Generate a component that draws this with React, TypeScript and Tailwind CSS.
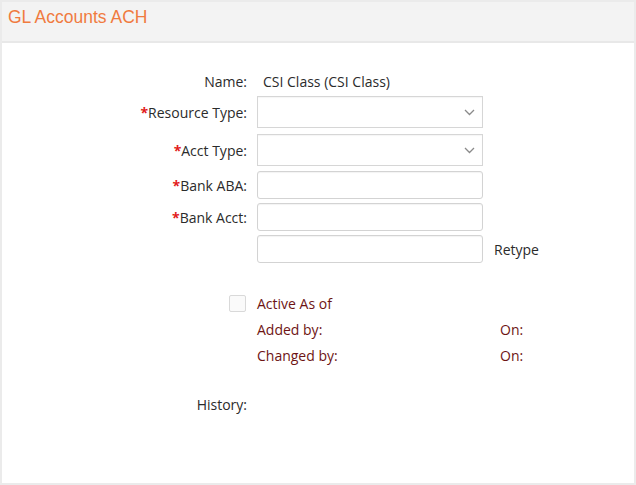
import React from "react";

const labelCls = "w-[245px] shrink-0 text-right text-[14px] text-[#2b2b2b]";

const Req: React.FC<{ text: string }> = ({ text }) => (
  <span>
    <span className="font-bold text-[#e21b1b]">*</span>
    {text}
  </span>
);

const Chevron = () => (
  <svg width="11" height="7" viewBox="0 0 11 7" className="text-[#8a8a8a]">
    <path d="M1 1l4.5 4.5L10 1" fill="none" stroke="currentColor" strokeWidth="1.3" />
  </svg>
);

const SelectBox = () => (
  <div className="ml-[10px] flex h-[32px] w-[226px] items-center justify-end border border-[#d6d6d6] bg-white pr-[7px] shadow-[inset_0_1px_1px_rgba(0,0,0,0.04)]">
    <Chevron />
  </div>
);

const TextBox = () => (
  <div className="ml-[10px] h-[28px] w-[226px] rounded-[3px] border border-[#d3d3d3] bg-white shadow-[inset_0_1px_1px_rgba(0,0,0,0.05)]" />
);

export default function App() {
  return (
    <div className="h-[485px] w-[636px] bg-white" style={{ fontFamily: "'Open Sans', sans-serif" }}>
      <div className="flex h-full flex-col border-2 border-[#ebebeb]">
        {/* header */}
        <div className="flex h-[41px] items-center border-b-2 border-[#e8e8e8] bg-[#f3f3f3] px-[6px] pb-[8px]">
          <span
            className="text-[17.5px] text-[#f07b3f]"
            style={{ fontFamily: "'Liberation Sans', Arial, sans-serif" }}
          >
            GL Accounts ACH
          </span>
        </div>

        {/* body */}
        <div className="flex flex-col pt-[26px]">
          <div className="flex h-[24px] items-center">
            <div className={labelCls}>Name:</div>
            <div className="ml-[16px] text-[14px] text-[#2b2b2b]">CSI Class (CSI Class)</div>
          </div>

          <div className="mt-[3px] flex items-center">
            <div className={labelCls}>
              <Req text="Resource Type:" />
            </div>
            <SelectBox />
          </div>

          <div className="mt-[6px] flex items-center">
            <div className={labelCls}>
              <Req text="Acct Type:" />
            </div>
            <SelectBox />
          </div>

          <div className="mt-[5px] flex items-center">
            <div className={labelCls}>
              <Req text="Bank ABA:" />
            </div>
            <TextBox />
          </div>

          <div className="mt-[4px] flex items-center">
            <div className={labelCls}>
              <Req text="Bank Acct:" />
            </div>
            <TextBox />
          </div>

          <div className="mt-[4px] flex items-center">
            <div className={labelCls} />
            <TextBox />
            <div className="ml-[11px] text-[14px] text-[#2b2b2b]">Retype</div>
          </div>

          {/* audit */}
          <div className="mt-[27px] flex h-[26px] items-center">
            <div className="flex w-[245px] shrink-0 justify-end pr-[1px]">
              <div className="h-[17px] w-[17px] rounded-[2px] border border-[#d9d9d9] bg-[#fafafa]" />
            </div>
            <div className="ml-[10px] text-[14px] text-[#6e1414]">Active As of</div>
          </div>

          <div className="flex h-[26px] items-center text-[14px] text-[#6e1414]">
            <div className="w-[245px] shrink-0" />
            <div className="ml-[10px] w-[243px]">Added by:</div>
            <div>On:</div>
          </div>

          <div className="flex h-[26px] items-center text-[14px] text-[#6e1414]">
            <div className="w-[245px] shrink-0" />
            <div className="ml-[10px] w-[243px]">Changed by:</div>
            <div>On:</div>
          </div>

          <div className="mt-[23px] flex h-[26px] items-center">
            <div className={labelCls}>History:</div>
          </div>
        </div>
      </div>
    </div>
  );
}
